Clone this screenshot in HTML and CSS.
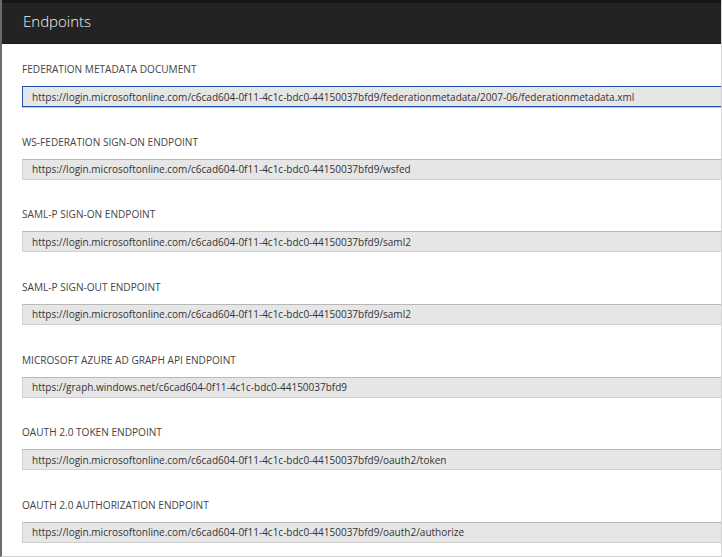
FILE: index.html
```html
<!DOCTYPE html>
<html>

<head>
  <meta charset="utf-8">
  <title>Endpoints</title>
  <link rel="stylesheet" href="styles.css">
</head>

<body>
  <div class="blade">
    <div class="blade-header">
      <h1>Endpoints</h1>
    </div>

    <div class="blade-content">
      <div class="field">
        <div class="field-label">FEDERATION METADATA DOCUMENT</div>
        <input class="field-input focused" type="text" readonly value="https://login.microsoftonline.com/c6cad604-0f11-4c1c-bdc0-44150037bfd9/federationmetadata/2007-06/federationmetadata.xml">
      </div>
      <div class="field">
        <div class="field-label">WS-FEDERATION SIGN-ON ENDPOINT</div>
        <input class="field-input" type="text" readonly value="https://login.microsoftonline.com/c6cad604-0f11-4c1c-bdc0-44150037bfd9/wsfed">
      </div>
      <div class="field">
        <div class="field-label">SAML-P SIGN-ON ENDPOINT</div>
        <input class="field-input" type="text" readonly value="https://login.microsoftonline.com/c6cad604-0f11-4c1c-bdc0-44150037bfd9/saml2">
      </div>
      <div class="field">
        <div class="field-label">SAML-P SIGN-OUT ENDPOINT</div>
        <input class="field-input" type="text" readonly value="https://login.microsoftonline.com/c6cad604-0f11-4c1c-bdc0-44150037bfd9/saml2">
      </div>
      <div class="field">
        <div class="field-label">MICROSOFT AZURE AD GRAPH API ENDPOINT</div>
        <input class="field-input" type="text" readonly value="https://graph.windows.net/c6cad604-0f11-4c1c-bdc0-44150037bfd9">
      </div>
      <div class="field">
        <div class="field-label">OAUTH 2.0 TOKEN ENDPOINT</div>
        <input class="field-input" type="text" readonly value="https://login.microsoftonline.com/c6cad604-0f11-4c1c-bdc0-44150037bfd9/oauth2/token">
      </div>
      <div class="field">
        <div class="field-label">OAUTH 2.0 AUTHORIZATION ENDPOINT</div>
        <input class="field-input" type="text" readonly value="https://login.microsoftonline.com/c6cad604-0f11-4c1c-bdc0-44150037bfd9/oauth2/authorize">
      </div>
    </div>
  </div>
</body>

</html>
```

FILE: styles.css
```css
* {
  margin: 0;
  padding: 0;
  box-sizing: border-box;
}

body {
  font-family: 'Open Sans', 'Noto Sans', Arial, sans-serif;
  background: #ffffff;
  color: #333;
}

.blade {
  width: 722px;
  height: 557px;
  border-left: 2px solid #6b6b6b;
  border-right: 1px solid #d4d4d4;
  border-bottom: 1px solid #cfcfcf;
  overflow: hidden;
}

.blade-header {
  height: 44px;
  background: #232323;
  border-top: 3px solid #151515;
  border-bottom: 1px solid #1a1a1a;
  padding-left: 21px;
  display: flex;
  align-items: center;
}

.blade-header h1 {
  color: #f2f2f2;
  font-size: 15px;
  font-weight: 300;
  margin-top: -5px;
}

.blade-content {
  padding: 17px 0 0 20px;
}

.field {
  margin-bottom: 26.67px;
}

.field-label {
  font-size: 10.1px;
  line-height: 16px;
  color: #444;
  margin-bottom: 9px;
}

.field-input {
  display: block;
  width: 720px;
  height: 21px;
  padding: 0 9px;
  font-family: 'Open Sans', 'Noto Sans', Arial, sans-serif;
  font-size: 10px;
  color: #333;
  background: #e6e6e6;
  border: 1px solid #d0d0d0;
  border-top-color: #b8b8b8;
  outline: none;
}

.field-input.focused {
  border: 1px solid #1f4fb4;
  box-shadow: 0 1px 0 #b9c9ea;
}
```
